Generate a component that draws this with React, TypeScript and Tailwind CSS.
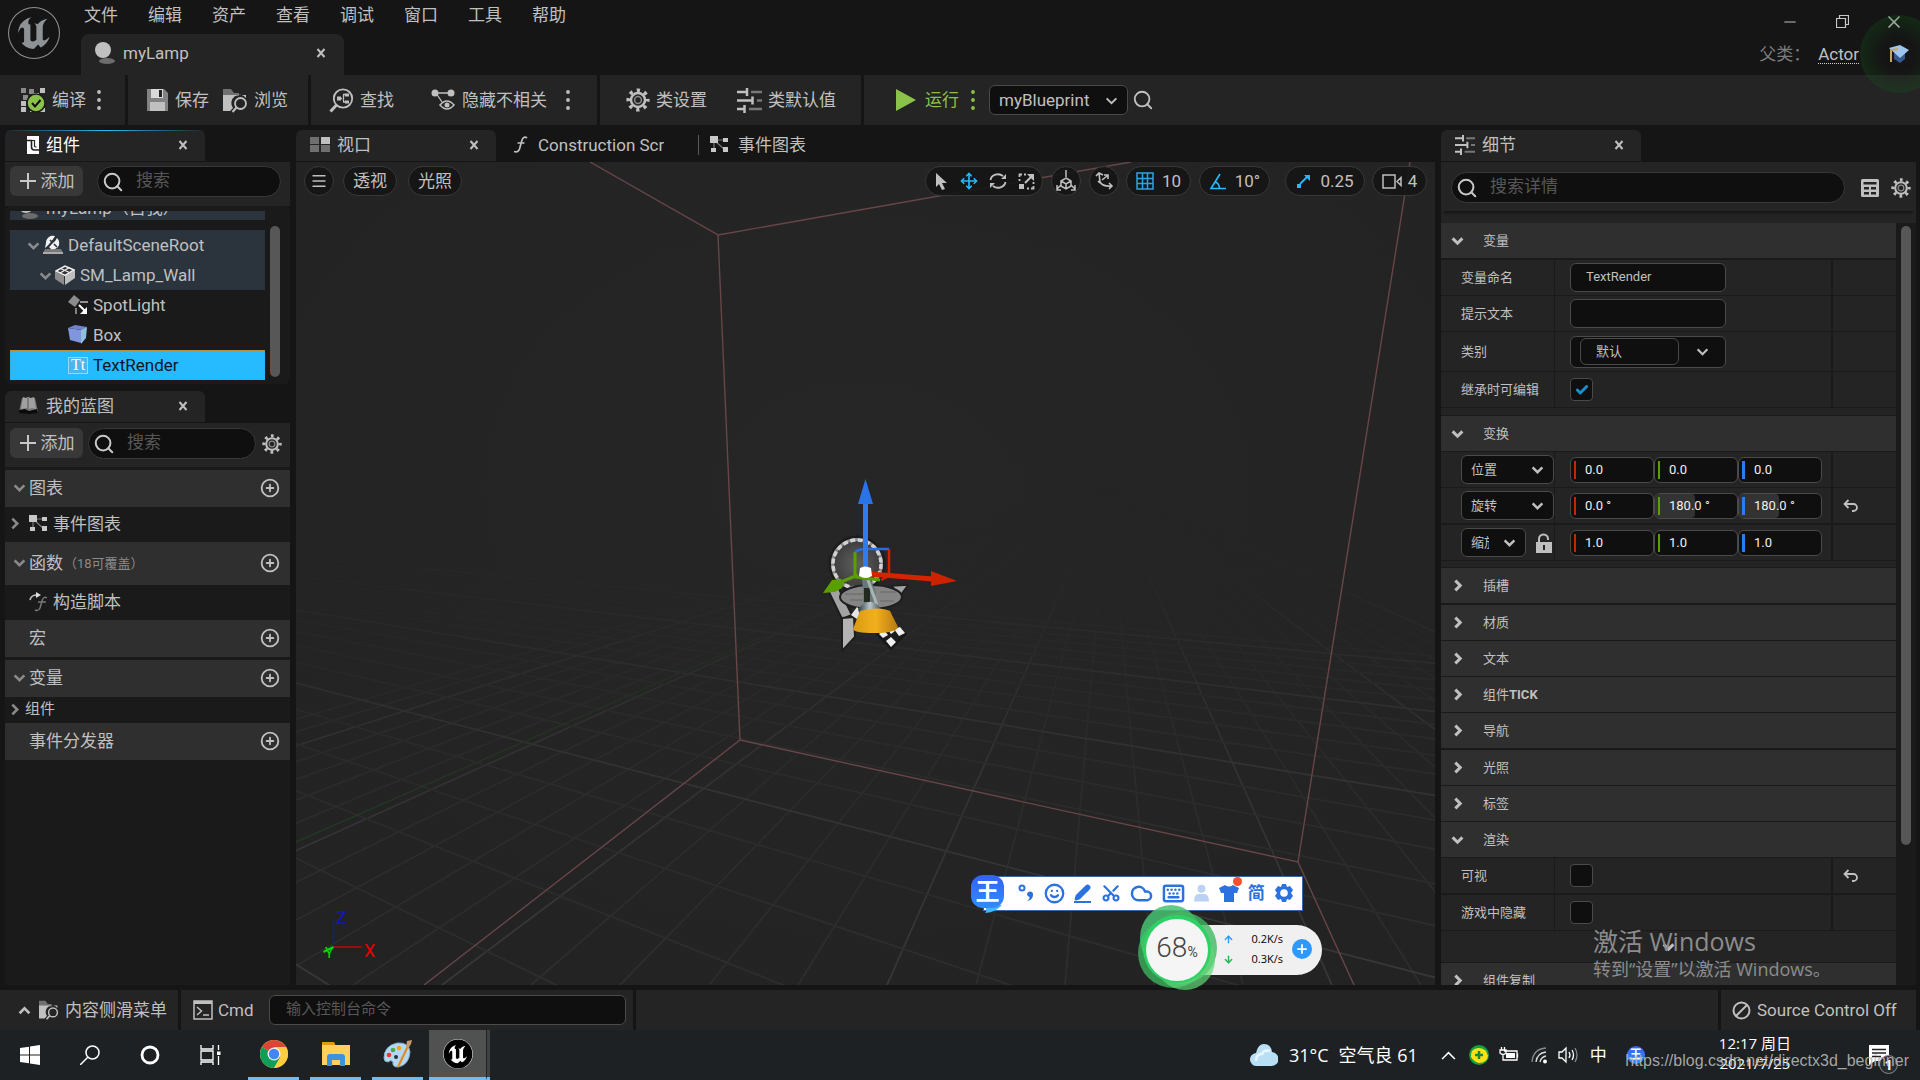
import React from "react";
import {
  ArrowDown,
  ArrowUp,
  Check,
  CirclePlus,
  Cloud,
  Keyboard,
  Menu,
  Minus,
  Move,
  Pencil,
  Plus,
  Scissors,
  Search,
  Smile,
  X,
} from "lucide-react";
import { SiUnrealengine } from "react-icons/si";

const LIGHT = "#c0c0c0";

/* ---------- icons ---------- */

const CHEVRONS = {
  down: "M1.500 4l4.500 4.500L10.500 4",
  up: "M1.500 8.500L6 4l4.500 4.500",
  right: "M4 1.500L8.500 6 4 10.500",
};

function Chevron({
  dir,
  weight = 2,
  color = LIGHT,
  size = 13,
  className = "",
}: {
  dir: keyof typeof CHEVRONS;
  weight?: number;
  color?: string;
  size?: number;
  className?: string;
}) {
  return (
    <svg
      width={size}
      height={size}
      viewBox="0 0 12 12"
      fill="none"
      stroke={color}
      strokeWidth={weight}
      className={"shrink-0 " + className}
      aria-hidden
    >
      <path d={CHEVRONS[dir]} />
    </svg>
  );
}

function CloseX() {
  return (
    <svg width="10" height="10" viewBox="0 0 10 10" aria-hidden>
      <path d="M1.500 1l7 8M8.500 1l-7 8" stroke={LIGHT} strokeWidth="2" />
    </svg>
  );
}

function Dots({ color = LIGHT }: { color?: string }) {
  return (
    <svg width="4" height="20" viewBox="0 0 4 20" fill={color} aria-hidden>
      <circle cx="2" cy="2" r="1.900" />
      <circle cx="2" cy="10" r="1.900" />
      <circle cx="2" cy="18" r="1.900" />
    </svg>
  );
}

function CompileIcon() {
  return (
    <svg width="26" height="26" viewBox="0 0 26 26" aria-hidden>
      <path d="M1 1h5v5H1zM9 2h5v5H9zM3 8h5v5H3z" fill="#8a8a8a" />
      <path
        d="M20 1h5v5h-5zM14 6h5v5h-5zM9 9h4v4H9zM1 14h5v5H1zM7 16h4v4H7zM1 20h5v5H1zM20 21h5v4h-5zM10 22h4v3h-4z"
        fill={LIGHT}
      />
      <circle cx="16" cy="16" r="9" fill="#8bc24a" stroke="#1b1b1b" strokeWidth="1.500" />
      <path d="M12 16l3 3.500 5.500-6.500" fill="none" stroke="#111" strokeWidth="2" />
    </svg>
  );
}

function SaveIcon() {
  return (
    <svg width="23" height="24" viewBox="0 0 23 24" aria-hidden>
      <path d="M1 1h17l4 4v18H1z" fill="#828282" />
      <path d="M5 1h12v9H5z" fill="#dadada" />
      <path d="M13 2h3v7h-3z" fill="#222" />
      <path d="M4 14h15v9H4z" fill={LIGHT} />
    </svg>
  );
}

function BrowseIcon({ size = 25 }: { size?: number }) {
  return (
    <svg width={size} height={size} viewBox="0 0 25 25" aria-hidden>
      <path d="M0 1h8l3 4h5v3H0z" fill="#707070" />
      <path d="M0 7h23v3a8 8 0 0 0-13 10l-3 3H0z" fill={LIGHT} />
      <circle cx="17.500" cy="15.500" r="5.500" fill="none" stroke={LIGHT} strokeWidth="1.800" />
      <path d="M13.500 19.500L9.500 24" stroke={LIGHT} strokeWidth="2" />
    </svg>
  );
}

function FindIcon() {
  return (
    <svg width="25" height="25" viewBox="0 0 25 25" fill="none" stroke={LIGHT} aria-hidden>
      <circle cx="14" cy="10.500" r="9.200" strokeWidth="1.800" />
      <path d="M7.500 17L1.500 23.500" strokeWidth="3" />
      <path d="M9 10.500h4M14.500 7v7M17 6.500h-3M17 14h-3" strokeWidth="1.300" />
      <path d="M8 8.500h4v4H8zM16 5.500h4v3h-4zM16 12.500h4v3h-4z" fill={LIGHT} stroke="none" />
    </svg>
  );
}

function HideIcon() {
  return (
    <svg width="25" height="25" viewBox="0 0 25 25" fill="none" stroke={LIGHT} aria-hidden>
      <path d="M4 5h15M5 5l6 9" strokeWidth="1.300" />
      <circle cx="4" cy="5" r="3.500" fill={LIGHT} stroke="none" />
      <circle cx="20" cy="5" r="3.500" fill={LIGHT} stroke="none" />
      <path d="M9 17q7-8 14 0q-7 8-14 0z" strokeWidth="1.600" />
      <circle cx="16" cy="17" r="2.500" fill={LIGHT} stroke="none" />
    </svg>
  );
}

function GearIcon({ size = 24 }: { size?: number }) {
  return (
    <svg width={size} height={size} viewBox="0 0 24 24" fill="none" aria-hidden>
      <circle
        cx="12"
        cy="12"
        r="9.800"
        stroke={LIGHT}
        strokeWidth="3.600"
        strokeDasharray="3.300 4.397"
        strokeDashoffset="1.600"
      />
      <circle cx="12" cy="12" r="7" stroke={LIGHT} strokeWidth="2.500" />
      <circle cx="12" cy="12" r="3.400" stroke="#8a8a8a" strokeWidth="1.500" />
    </svg>
  );
}

function SlidersIcon({ size = 25 }: { size?: number }) {
  return (
    <svg width={size} height={size} viewBox="0 0 25 25" aria-hidden>
      <path d="M14 4h11M20 12.500h5M12 21h13" stroke="#777" strokeWidth="2.500" />
      <path d="M0 4h10M0 12.500h15M0 21h7" stroke={LIGHT} strokeWidth="2.500" />
      <path d="M10 0v8M15.500 8.500v8M7.500 17v8" stroke={LIGHT} strokeWidth="2.500" />
    </svg>
  );
}

function GraphIcon() {
  return (
    <svg width="19" height="17" viewBox="0 0 19 17" aria-hidden>
      <path d="M4 4h12M4 4v10M4 4l11 10" stroke="#777" strokeWidth="1.200" />
      <path d="M0 0h8v7H0zM13 2h5v4h-5zM1 12h5v4H1zM13 11h5v5h-5z" fill="#c8c8c8" />
    </svg>
  );
}

function SphereIcon() {
  return (
    <svg width="20" height="24" viewBox="0 0 20 24" aria-hidden>
      <ellipse cx="12" cy="20" rx="8" ry="3" fill="#6c6c6c" />
      <circle cx="8" cy="9" r="8" fill={LIGHT} />
    </svg>
  );
}

function ComponentsIcon() {
  return (
    <svg width="12" height="18" viewBox="0 0 12 18" aria-hidden>
      <path d="M0 0h12v18H0z" fill="#fff" />
      <path d="M0 4.500h4.500V11q0 3 3 3H12" fill="none" stroke="#222" strokeWidth="1.600" />
      <path d="M4.500 4.500h3V10q0 1 2 1" fill="none" stroke="#222" strokeWidth="1.200" />
    </svg>
  );
}

function BookIcon() {
  return (
    <svg width="20" height="19" viewBox="0 0 20 19" aria-hidden>
      <path d="M3 2h13l3 14H0z" fill="#777" />
      <path d="M4 1l3 1 2-1 3 1 3-1 2 12-4-1-3 1-3-1-5 1z" fill="#a0a0a0" />
      <path d="M0 14l6-1 4 2 8-2 1 4-9 1-10-1z" fill="#0b0b0b" />
      <path d="M9 2v11" stroke="#555" />
    </svg>
  );
}

function ViewportIcon() {
  return (
    <svg width="20" height="15" viewBox="0 0 20 15" aria-hidden>
      <path d="M0 0h9v7H0zM0 8h9v7H0zM11 8h9v7h-9z" fill="#707070" />
      <path d="M11 0h9v7h-9z" fill={LIGHT} />
    </svg>
  );
}

function FuncIcon() {
  return (
    <svg width="15" height="17" viewBox="0 0 15 17" fill="none" stroke={LIGHT} strokeWidth="1.700" aria-hidden>
      <path d="M14 2q-3-2.500-5 2L6.500 13q-1.500 4-5.500 2.500M4.500 7h7" />
    </svg>
  );
}

function OverrideFuncIcon() {
  return (
    <svg width="19" height="20" viewBox="0 0 19 20" fill="none" aria-hidden>
      <path d="M18 6q-3-2-4.500 1.500L11 16q-1.500 3.500-5 2M9 10h8" stroke="#777" strokeWidth="1.500" />
      <path d="M1 8q1-5 7-5" stroke={LIGHT} strokeWidth="1.600" />
      <path d="M7 0l5 3-5 3z" fill="#ddd" />
    </svg>
  );
}

function SceneRootIcon() {
  return (
    <svg width="20" height="20" viewBox="0 0 20 20" aria-hidden>
      <path d="M2 14h16l2 4H0z" fill="#777" />
      <path d="M0 17h20v2H0z" fill="#aaa" />
      <path d="M3 8a7 7 0 0 1 9-7l-4 7-6 5z" fill="#f2f2f2" />
      <path d="M14 3q4 4 1 9-3 3-7 2l-2-2 5-4z" fill="#f2f2f2" />
      <path d="M13 2L3 14M7 5l7 7" stroke="#2b333c" strokeWidth="1.600" />
      <path d="M8 11l4-4" stroke="#f2f2f2" strokeWidth="1.400" />
    </svg>
  );
}

function MeshIcon() {
  return (
    <svg width="20" height="20" viewBox="0 0 20 20" aria-hidden>
      <path d="M0 6l9 5v9l-9-6z" fill="#8c8c8c" />
      <path d="M20 5v8l-10 7v-9z" fill="#bdbdbd" />
      <path d="M1 6l9-5 9 4-9 5.500z" fill="#333" stroke="#eee" strokeWidth="1.500" />
      <path d="M5.500 3.500l9 4M5 8l9.500-5.500" stroke="#eee" strokeWidth="1.300" />
    </svg>
  );
}

function SpotIcon() {
  return (
    <svg width="20" height="20" viewBox="0 0 20 20" fill="none" aria-hidden>
      <path d="M6 0l6 5-5 7-7-5z" fill="#8c8c8c" />
      <path d="M8 13v6M12 7h8" stroke="#bbb" strokeWidth="1.300" />
      <path d="M11 10l7 7" stroke="#fff" strokeWidth="2" />
      <path d="M19 12v7h-7z" fill="#fff" />
    </svg>
  );
}

function BoxIcon() {
  return (
    <svg width="20" height="20" viewBox="0 0 20 20" aria-hidden>
      <path d="M0 3l7-3 12 2-5 3z" fill="#6f83cf" />
      <path d="M0 3l13 2v13L2 15z" fill="#7f95de" />
      <path d="M13 5l6-3-1 11-5 6z" fill="#8fc0dd" />
    </svg>
  );
}

function TextIcon() {
  return (
    <span className="flex h-[17px] w-5 items-center justify-center border border-[#8fdcff] bg-[#4db5e8] font-['Liberation_Serif',serif] text-base leading-none text-white">
      Tt
    </span>
  );
}

function UndoIcon() {
  return (
    <svg width="15" height="13" viewBox="0 0 15 13" fill="none" stroke={LIGHT} strokeWidth="1.800" aria-hidden>
      <path d="M5.500 1L1.500 5l4 4M2 5h8.500a3 3 0 0 1 0 7H9" />
    </svg>
  );
}

function LockIcon() {
  return (
    <svg width="16" height="20" viewBox="0 0 16 20" aria-hidden>
      <path d="M3 10V6a4.500 4.500 0 0 1 9 0v1" fill="none" stroke={LIGHT} strokeWidth="2" />
      <path d="M0 9h16v11H0z" fill={LIGHT} />
      <path d="M7 12h2v5H7z" fill="#242424" />
    </svg>
  );
}

/* ---------- shared pieces ---------- */

function PanelTab({
  icon,
  label,
  active = false,
}: {
  icon: React.ReactNode;
  label: string;
  active?: boolean;
}) {
  return (
    <div
      className={
        "relative flex h-[31px] w-[200px] shrink-0 items-center rounded-t-md bg-[#242424] pb-[2px] pl-[14px] pr-[17px] " +
        (active ? "text-white" : "text-[#c0c0c0]")
      }
    >
      {active && (
        <div className="absolute inset-x-0 top-0 h-px bg-linear-to-r from-transparent via-[#26bbff] to-transparent" />
      )}
      <span className="flex w-[27px] items-center">{icon}</span>
      <span className="flex-1">{label}</span>
      <button aria-label={"关闭" + label}>
        <CloseX />
      </button>
    </div>
  );
}

function AddButton() {
  return (
    <button className="flex h-[30px] w-[73px] shrink-0 items-center justify-center gap-[3px] rounded-md bg-[#383838] text-[#c0c0c0]">
      <svg width="18" height="18" viewBox="0 0 18 18" stroke="#c8c8c8" strokeWidth="2" aria-hidden>
        <path d="M9 1v16M1 9h16" />
      </svg>
      <span className="pl-px">添加</span>
    </button>
  );
}

function SearchBox({ placeholder, className }: { placeholder: string; className: string }) {
  return (
    <label
      className={
        "flex h-[31px] min-w-0 items-center gap-3 rounded-full border border-[#383838] bg-[#0f0f0f] pl-1 " + className
      }
    >
      <Search size={22} strokeWidth={2.2} className="shrink-0 text-[#c8c8c8]" />
      <input
        type="text"
        aria-label={placeholder}
        placeholder={placeholder}
        className="w-full min-w-0 bg-transparent pb-[3px] outline-none placeholder:text-[#575757]"
      />
    </label>
  );
}

/* ---------- header ---------- */

const MENUS = ["文件", "编辑", "资产", "查看", "调试", "窗口", "工具", "帮助"];

function Header() {
  return (
    <header className="flex h-[75px] shrink-0 bg-[#151515]">
      <div className="flex w-[81px] shrink-0 justify-center pr-[13px] pt-[7px]">
        <SiUnrealengine size={52} color="#8e9294" />
      </div>
      <div className="flex flex-1 flex-col justify-between">
        <nav className="flex h-[29px] items-center pl-[3px]">
          {MENUS.map((m) => (
            <button key={m} className="w-16 text-left">
              {m}
            </button>
          ))}
        </nav>
        <div className="flex h-[41px] w-[263px] items-center rounded-t-lg bg-[#242424] pb-[3px] pl-[14px] pr-[18px]">
          <SphereIcon />
          <span className="ml-2 flex-1">myLamp</span>
          <button aria-label="关闭 myLamp">
            <CloseX />
          </button>
        </div>
      </div>
      <div className="flex flex-col items-end">
        <div className="flex h-[43px] items-center">
          <button aria-label="最小化" className="flex w-[52px] justify-center">
            <Minus size={18} strokeWidth={1.5} />
          </button>
          <button aria-label="还原" className="flex w-[52px] justify-center">
            <svg width="13" height="13" viewBox="0 0 13 13" fill="none" stroke="#c8c8c8" strokeWidth="1.200">
              <path d="M3.500 3.500v-3h9v9h-3M.5 3.500h9v9h-9z" />
            </svg>
          </button>
          <button aria-label="关闭" className="flex w-[52px] justify-center">
            <X size={20} strokeWidth={2} />
          </button>
        </div>
        <div className="flex h-[22px] items-center gap-2 pr-[61px]">
          <span className="text-[#7a7a7a]">父类：</span>
          <a href="#actor" className="border-b border-dotted border-[#d0d0d0] leading-[18px]">
            Actor
          </a>
        </div>
      </div>
    </header>
  );
}

/* ---------- toolbar ---------- */

function ToolButton({
  icon,
  label,
  className = "",
}: {
  icon: React.ReactNode;
  label: string;
  className?: string;
}) {
  return (
    <button className={"flex shrink-0 items-center gap-[6px] " + className}>
      {icon}
      <span className="whitespace-nowrap">{label}</span>
    </button>
  );
}

function Toolbar() {
  return (
    <div className="flex h-[50px] shrink-0 gap-[3px] bg-[#151515] *:bg-[#242424]">
      <div className="flex w-[125px] items-center pl-5">
        <ToolButton icon={<CompileIcon />} label="编译" />
        <button aria-label="编译选项" className="ml-[11px]">
          <Dots />
        </button>
      </div>
      <div className="flex w-[180px] items-center gap-[14px] pl-[18px]">
        <ToolButton icon={<SaveIcon />} label="保存" className="gap-2" />
        <ToolButton icon={<BrowseIcon />} label="浏览" />
      </div>
      <div className="flex w-[286px] items-center pl-[18px]">
        <ToolButton icon={<FindIcon />} label="查找" />
        <ToolButton icon={<HideIcon />} label="隐藏不相关" className="ml-[37px]" />
        <button aria-label="隐藏选项" className="ml-[19px]">
          <Dots />
        </button>
      </div>
      <div className="flex w-[261px] items-center gap-[30px] pl-[26px]">
        <ToolButton icon={<GearIcon />} label="类设置" />
        <ToolButton icon={<SlidersIcon />} label="类默认值" />
      </div>
      <div className="flex flex-1 items-center pl-8">
        <button className="flex items-center gap-[9px] text-[#8bc24a]">
          <svg width="20" height="22" viewBox="0 0 20 22" aria-hidden>
            <path d="M0 0l20 11L0 22z" fill="#8bc24a" />
          </svg>
          运行
        </button>
        <button aria-label="运行选项" className="ml-3">
          <Dots color="#8bc24a" />
        </button>
        <div className="relative ml-[14px] flex items-center">
          <select
            aria-label="调试对象"
            className="h-[30px] w-[139px] appearance-none rounded-md border border-[#4a4a4a] bg-[#0f0f0f] pl-[9px] outline-none"
          >
            <option>myBlueprint</option>
          </select>
          <Chevron dir="down" weight={1.8} className="pointer-events-none absolute right-[10px]" />
        </div>
        <button aria-label="查找调试对象" className="ml-[4px]">
          <Search size={22} strokeWidth={2} />
        </button>
      </div>
    </div>
  );
}

/* ---------- left column ---------- */

function TreeRow({
  icon,
  label,
  className,
  chevron = false,
}: {
  icon: React.ReactNode;
  label: string;
  className: string;
  chevron?: boolean;
}) {
  return (
    <li className={"flex h-[30px] items-center " + className}>
      {chevron && <Chevron dir="down" weight={2.4} color="#8a8a8a" className="mr-[3px]" />}
      <span className="flex w-[25px] shrink-0 items-center">{icon}</span>
      <span>{label}</span>
    </li>
  );
}

function ComponentsPanel() {
  return (
    <section className="pt-[5px]">
      <PanelTab
        icon={
          <span className="pl-2">
            <ComponentsIcon />
          </span>
        }
        label="组件"
        active
      />
      <div className="mt-px flex h-11 items-start gap-[14px] bg-[#242424] pl-[5px] pr-[9px] pt-1">
        <AddButton />
        <SearchBox placeholder="搜索" className="flex-1" />
      </div>
      <div className="flex h-[178px] rounded-md bg-[#1a1a1a] pl-[5px] pr-[10px] pt-[5px]">
        <ul className="flex-1">
          <li className="flex h-[9px] items-end overflow-hidden bg-[#2b333c] pl-2 text-[#c0c0c0]">
            <span className="flex h-6 items-center gap-2">
              <SphereIcon />
              <span>myLamp（自我）</span>
            </span>
          </li>
          <li className="h-[10px]" aria-hidden />
          <TreeRow chevron icon={<SceneRootIcon />} label="DefaultSceneRoot" className="bg-[#2b333c] pl-[17px]" />
          <TreeRow chevron icon={<MeshIcon />} label="SM_Lamp_Wall" className="bg-[#2b333c] pl-[29px]" />
          <TreeRow icon={<SpotIcon />} label="SpotLight" className="pl-[58px]" />
          <TreeRow icon={<BoxIcon />} label="Box" className="pl-[58px]" />
          <TreeRow
            icon={<TextIcon />}
            label="TextRender"
            className="border border-dotted border-[#c08a30] bg-[#26bbff] pl-[57px] text-[#10181e]"
          />
        </ul>
        <div className="ml-[5px] mt-[15px] h-[151px] w-[10px] rounded-full bg-[#575757]" />
      </div>
    </section>
  );
}

function GroupHeader({
  label,
  note,
  chevron = false,
  className,
}: {
  label: string;
  note?: string;
  chevron?: boolean;
  className: string;
}) {
  return (
    <div className={"flex items-center bg-[#2f2f2f] pb-[2px] pr-[10px] " + className}>
      <span className="flex w-6 shrink-0 justify-end pr-[3px]">
        {chevron && <Chevron dir="down" weight={2.4} color="#8a8a8a" />}
      </span>
      <span>{label}</span>
      {note && <span className="ml-px pt-[2px] text-[13px] text-[#8a8a8a]">{note}</span>}
      <button aria-label={"添加" + label} className="ml-auto">
        <CirclePlus size={20} strokeWidth={2.2} />
      </button>
    </div>
  );
}

function BlueprintPanel() {
  return (
    <section className="flex min-h-0 flex-1 flex-col pt-[7px]">
      <PanelTab icon={<BookIcon />} label="我的蓝图" />
      <div className="mt-px flex h-11 shrink-0 items-start bg-[#242424] pl-[5px] pr-2 pt-[5px]">
        <AddButton />
        <SearchBox placeholder="搜索" className="ml-[5px] flex-1" />
        <button aria-label="设置" className="ml-[6px] mt-[6px]">
          <GearIcon size={20} />
        </button>
      </div>
      <div className="flex-1 bg-[#1a1a1a] pt-[3px]">
        <GroupHeader label="图表" chevron className="h-[37px]" />
        <div className="flex h-[35px] items-center pb-[2px] pl-[3px]">
          <Chevron dir="right" weight={2.4} color="#8a8a8a" className="mr-2" />
          <GraphIcon />
          <span className="ml-[5px]">事件图表</span>
        </div>
        <GroupHeader label="函数" note="（18可覆盖）" chevron className="h-[43px]" />
        <div className="flex h-[35px] items-center pb-[2px] pl-6">
          <OverrideFuncIcon />
          <span className="ml-[5px]">构造脚本</span>
        </div>
        <GroupHeader label="宏" className="mb-[3px] h-[37px]" />
        <GroupHeader label="变量" chevron className="h-[37px]" />
        <div className="flex h-[26px] items-center pb-[2px] pl-[3px] text-[15px]">
          <Chevron dir="right" weight={2.4} color="#8a8a8a" className="mr-1" />
          组件
        </div>
        <GroupHeader label="事件分发器" className="h-[37px]" />
      </div>
    </section>
  );
}

/* ---------- viewport ---------- */

const FAN = Array.from({ length: 34 }, (_, i) => 1065 + (i - 19) * 89);
const CROSS = Array.from({ length: 24 }, (_, i) => -125 + i * 227);

function Scene() {
  return (
    <svg
      className="absolute inset-0 h-full w-full"
      viewBox="296 162 1139 823"
      preserveAspectRatio="xMidYMid slice"
      aria-label="三维场景"
    >
      <defs>
        <linearGradient id="fade" x1="0" y1="0" x2="0" y2="1">
          <stop offset="0" stopColor="#fff" stopOpacity="0" />
          <stop offset="0.200" stopColor="#fff" stopOpacity="0.120" />
          <stop offset="0.500" stopColor="#fff" stopOpacity="0.650" />
          <stop offset="1" stopColor="#fff" />
        </linearGradient>
        <mask id="ground" maskUnits="userSpaceOnUse" x="296" y="485" width="1139" height="500">
          <rect x="296" y="485" width="1139" height="500" fill="url(#fade)" />
        </mask>
        <linearGradient id="axis" x1="0" y1="1" x2="1" y2="0">
          <stop offset="0" stopColor="#223a22" />
          <stop offset="1" stopColor="#242824" />
        </linearGradient>
        <radialGradient id="backdrop" cx="0.500" cy="0.400" r="0.700">
          <stop offset="0" stopColor="#262626" />
          <stop offset="1" stopColor="#232323" />
        </radialGradient>
        <linearGradient id="shade" x1="0" y1="0" x2="1" y2="0">
          <stop offset="0" stopColor="#d99a12" />
          <stop offset="0.500" stopColor="#f2b01e" />
          <stop offset="1" stopColor="#b67a10" />
        </linearGradient>
        <linearGradient id="metal" x1="0" y1="0" x2="1" y2="0">
          <stop offset="0" stopColor="#2c3a44" />
          <stop offset="0.500" stopColor="#b9c4c8" />
          <stop offset="1" stopColor="#33424c" />
        </linearGradient>
        <radialGradient id="dome">
          <stop offset="0" stopColor="#606060" />
          <stop offset="1" stopColor="#3a3a3a" />
        </radialGradient>
      </defs>
      <rect x="296" y="162" width="1139" height="823" fill="url(#backdrop)" />
      <g mask="url(#ground)" strokeWidth="1.800">
        {FAN.map((x, i) => (
          <path key={x} d={`M1108 485L${x} 985`} stroke={i % 5 === 2 ? "#383838" : "#2e2e2e"} />
        ))}
        {CROSS.map((x, i) => (
          <path key={x} d={`M-470 485L${x + x + 470} 1485`} stroke={i % 5 === 2 ? "#383838" : "#2e2e2e"} />
        ))}
      </g>
      <path d="M296 842L860 594" stroke="url(#axis)" strokeWidth="1.300" />
      <g fill="none" stroke="#684548" strokeWidth="1.400">
        <path d="M590 162L718 235L740 740L424 985M740 740L1298 862L1410 162M718 235L1131 162M1298 862L1354 985" />
      </g>

      <g strokeLinejoin="round">
        <circle cx="857" cy="564" r="26" fill="url(#dome)" stroke="#1c1c1c" strokeWidth="5" />
        <circle cx="857" cy="564" r="24.500" fill="none" stroke="#8c8c8c" strokeWidth="3" />
        <circle cx="857" cy="564" r="24" fill="none" stroke="#d2d2d2" strokeWidth="3.500" strokeDasharray="5 2.540" />
        <path d="M827 588l9-5 16 32-10 4z" fill="#a3a3a3" stroke="#1e1e1e" strokeWidth="2" />
        <path d="M892 586l16-1-8 11z" fill="#a3a3a3" stroke="#1e1e1e" strokeWidth="1.500" />
        <ellipse cx="871" cy="597" rx="31" ry="12" fill="#858585" stroke="#1e1e1e" strokeWidth="2" />
        <path d="M845 594h22M850 600h18M880 592h16M880 601h14" stroke="#666" strokeWidth="1" />
        <path d="M842 618l12-1 1 20-13 14z" fill="#b3b3b3" stroke="#1e1e1e" strokeWidth="2" />
        <path d="M851 615l6-8 4 4-4 8z" fill="#e5e5e5" />
        <path d="M862 578h8l6 14-3 14h-9z" fill="#69767c" />
        <path d="M864 588h6v14h-6z" fill="#22291f" />
        <path d="M868 580l9 25" stroke="#a9b3b3" strokeWidth="3" />
        <path d="M858 609q10-12 20-4l4 6-5 5h-17z" fill="url(#metal)" />
        <path d="M877 634l13-11 16 11-15 15z" fill="#1c1c1c" stroke="#181818" strokeWidth="2" />
        <path
          d="M879 634l5-4 4 5-5 3zM894 629l6-2 5 6-6 3zM886 641l5-4 5 5-5 5zM888 630l4-2 3 3-4 3z"
          fill="#f0f0f0"
        />
        <path d="M860 611q20-5 30 0l8 16q-2 6-24 6-20 0-21-4z" fill="url(#shade)" />
      </g>

      <g>
        <path d="M855 576v-24M858 575l-22 9" stroke="#5a9e00" strokeWidth="3" />
        <path d="M855 577l25 3" stroke="#5a9e00" strokeWidth="3" />
        <path d="M855 552q4-3 10-3h24" fill="none" stroke="#2b6be0" strokeWidth="2.500" />
        <path d="M889 549v27l-8 4" fill="none" stroke="#cc2200" strokeWidth="2.500" />
        <path d="M870 574l63 5" stroke="#d42400" strokeWidth="5" />
        <path d="M931 571l26 10-26 5z" fill="#cc2200" />
        <path d="M823 593l9-13 9-1q4 4 1 9l-7 4z" fill="#5a9e00" />
        <path d="M865.500 570v-68" stroke="#2f7cf0" strokeWidth="5" />
        <path d="M858 504l7.500-25 7.500 25z" fill="#2b73e8" />
        <path d="M860 568q5-3 11 0l1 8q-6 4-13 0z" fill="#fff" />
      </g>

      <g fill="none" strokeWidth="1.200">
        <path d="M333.500 947v-30" stroke="#1111d8" />
        <path d="M333.500 947h28" stroke="#e80000" />
        <path d="M333.500 947l-10 5" stroke="#00e000" strokeWidth="2" />
      </g>
      <g className="font-[Roboto,sans-serif]" fontSize="18">
        <text x="336" y="924" fill="#1111d8">
          Z
        </text>
        <text x="364" y="957" fill="#e80000">
          X
        </text>
        <text x="325" y="958" fill="#00e000" fontSize="14">
          Y
        </text>
      </g>
    </svg>
  );
}

const PILL =
  "flex h-[30px] items-center justify-center rounded-full border border-[#383838] bg-[#151515]/90 text-[#c0c0c0]";

function ViewportToolbar() {
  return (
    <div className="absolute inset-x-0 top-1 flex items-center pl-2 pr-2">
      <button aria-label="视口选项" className={PILL + " w-[30px]"}>
        <Menu size={18} strokeWidth={1.8} />
      </button>
      <button className={PILL + " ml-[9px] w-[54px]"}>透视</button>
      <button className={PILL + " ml-[11px] w-[54px]"}>光照</button>
      <div className={PILL + " ml-auto w-[118px] gap-[11px]"}>
        <button aria-label="选择">
          <svg width="15" height="18" viewBox="0 0 15 18">
            <path d="M2 1l11 10H8l3 6-3 1-3-6-3 3z" fill={LIGHT} />
          </svg>
        </button>
        <button aria-label="移动" className="text-[#26bbff]">
          <Move size={18} strokeWidth={2.2} />
        </button>
        <button aria-label="旋转">
          <svg width="18" height="18" viewBox="0 0 18 18" fill="none" stroke={LIGHT} strokeWidth="1.800">
            <path d="M1.500 8A7.500 6.500 0 0 1 14 4M16.500 10A7.500 6.500 0 0 1 4 14" />
            <path d="M17 2v5h-5zM1 16v-5h5z" fill={LIGHT} stroke="none" />
          </svg>
        </button>
        <button aria-label="缩放">
          <svg width="17" height="17" viewBox="0 0 17 17" fill="none" stroke={LIGHT} strokeWidth="1.800">
            <path d="M1.500 8V6M1.500 4V1.500H4M6 1.500h2M15.500 9v2M15.500 13v2.500H13M11 15.500H9" />
            <path d="M7 10l6-6" strokeWidth="2" />
            <path d="M9 1h7v7zM1 11h5v5H1z" fill={LIGHT} stroke="none" />
          </svg>
        </button>
      </div>
      <button aria-label="世界坐标" className={PILL + " ml-2 w-[30px]"}>
        <svg width="22" height="24" viewBox="0 0 22 24" fill="none" stroke={LIGHT} strokeWidth="1.500">
          <path d="M11 1v7M11 9l5 3v5l-5 3-5-3v-5zM6 12l5 3 5-3M11 15v5M6 16l-4 4M16 16l4 4M2 16v5h4M20 16v5h-4" />
        </svg>
      </button>
      <button aria-label="表面对齐" className={PILL + " ml-2 w-[30px]"}>
        <svg width="20" height="20" viewBox="0 0 20 20" fill="none" stroke={LIGHT} strokeWidth="1.600">
          <path d="M5 2l1 9q3 5 12 4M2 5l3-3 4 2M15 12l3 3-3 3M8 9l5-4M10 4h4v4M4 10l2 2" />
        </svg>
      </button>
      <button className={PILL + " ml-[7px] w-[65px] gap-2"}>
        <svg width="18" height="18" viewBox="0 0 18 18" fill="none" stroke="#26a7e5" strokeWidth="1.500">
          <path d="M1 1h16v16H1zM6.500 1v16M11.500 1v16M1 6.500h16M1 11.500h16" />
        </svg>
        10
      </button>
      <button className={PILL + " ml-2 w-[71px] gap-2"}>
        <svg width="18" height="17" viewBox="0 0 18 17" fill="none" stroke="#26bbff" strokeWidth="1.600">
          <path d="M11 1L2 15.500h15M6 9q4 1 4.500 6" />
        </svg>
        10°
      </button>
      <button className={PILL + " ml-[15px] w-[80px] gap-[9px]"}>
        <svg width="15" height="15" viewBox="0 0 15 15">
          <path d="M4 10l7-7" stroke="#26bbff" strokeWidth="1.800" />
          <path d="M8 1h6v6zM1 10h4v4H1z" fill="#26bbff" />
        </svg>
        0.25
      </button>
      <button className={PILL + " ml-[7px] w-[55px] gap-[6px]"}>
        <svg width="20" height="15" viewBox="0 0 20 15" fill="none" stroke={LIGHT} strokeWidth="1.500">
          <path d="M1 1h12v13H1zM15 7.500l4-4v8z" />
        </svg>
        4
      </button>
    </div>
  );
}

function ViewportPanel() {
  return (
    <main className="flex min-w-0 flex-1 flex-col pt-[5px]">
      <div className="flex h-8 shrink-0 items-start">
        <PanelTab icon={<ViewportIcon />} label="视口" />
        <button className="ml-[17px] flex h-[31px] w-[185px] items-center gap-[10px] pb-[2px] text-[#c0c0c0]">
          <FuncIcon />
          <span className="w-[126px] overflow-hidden whitespace-nowrap text-left">Construction Script</span>
        </button>
        <div className="mt-[5px] h-5 w-px bg-[#5a5a5a]" />
        <button className="ml-[11px] flex h-[31px] items-center gap-[9px] pb-[2px] text-[#c0c0c0]">
          <GraphIcon />
          事件图表
        </button>
      </div>
      <div className="relative flex-1 overflow-hidden bg-[#242424]">
        <Scene />
        <ViewportToolbar />
      </div>
    </main>
  );
}

/* ---------- details ---------- */

function Category({
  label,
  strong,
  open = false,
  thick = false,
}: {
  label: string;
  strong?: string;
  open?: boolean;
  thick?: boolean;
}) {
  return (
    <div
      className={
        "flex shrink-0 items-center border-[#1a1a1a] bg-[#2f2f2f] pl-[10px] " +
        (thick ? "h-[37px] border-b-2" : "h-9 border-b")
      }
    >
      <button aria-label={label} aria-expanded={open} className="flex w-8">
        <Chevron dir={open ? "down" : "right"} weight={2.8} />
      </button>
      <span>
        {label}
        {strong && <b>{strong}</b>}
      </span>
    </div>
  );
}

function Row({
  name,
  children,
  reset = false,
  className = "h-9 border-b",
}: {
  name: React.ReactNode;
  children?: React.ReactNode;
  reset?: boolean;
  className?: string;
}) {
  return (
    <div className={"flex shrink-0 border-[#1a1a1a] bg-[#242424] " + className}>
      <div className="flex w-[114px] shrink-0 items-center border-r border-[#1a1a1a] pl-5">{name}</div>
      <div className="flex flex-1 items-center pl-[15px]">{children}</div>
      <div className="flex w-[65px] shrink-0 items-center border-l-2 border-[#1a1a1a] pl-[10px]">
        {reset && (
          <button aria-label="重置为默认值">
            <UndoIcon />
          </button>
        )}
      </div>
    </div>
  );
}

function CheckBox({ label, checked = false }: { label: string; checked?: boolean }) {
  return (
    <span className="relative flex size-[23px] items-center justify-center">
      <input
        type="checkbox"
        aria-label={label}
        defaultChecked={checked}
        className="absolute inset-0 appearance-none rounded border border-[#4a4a4a] bg-[#0f0f0f]"
      />
      {checked && <Check size={14} strokeWidth={5} className="pointer-events-none relative text-[#1b8fce]" />}
    </span>
  );
}

function NameSelect({ value, className }: { value: string; className: string }) {
  return (
    <span className="relative flex items-center">
      <select
        aria-label={value}
        className={
          "h-[29px] appearance-none overflow-hidden rounded-md border border-[#4a4a4a] bg-[#0f0f0f] pl-[9px] outline-none " +
          className
        }
      >
        <option>{value}</option>
      </select>
      <Chevron dir="down" weight={2.2} className="pointer-events-none absolute right-[10px]" />
    </span>
  );
}

const AXIS = [
  { name: "X", bar: "w-[2px] bg-[#cc2200]" },
  { name: "Y", bar: "w-[2px] bg-[#5a9e00]" },
  { name: "Z", bar: "w-[3px] bg-[#2b7cf0]" },
];

function Vector({ label, values, filled = false }: { label: string; values: string[]; filled?: boolean }) {
  return (
    <div className="flex">
      {values.map((v, i) => (
        <label
          key={AXIS[i].name}
          className="relative flex h-[26px] w-[84px] items-center overflow-hidden rounded-md border border-[#4a4a4a] bg-[#0f0f0f] pl-[3px]"
        >
          {filled && i > 0 && <span className="absolute inset-y-0 left-0 w-10 rounded bg-[#333]" />}
          <span className={"relative h-[18px] shrink-0 " + AXIS[i].bar} />
          <input
            type="text"
            aria-label={label + " " + AXIS[i].name}
            defaultValue={v}
            className="relative w-full min-w-0 bg-transparent pl-[9px] text-[#f0f0f0] outline-none"
          />
        </label>
      ))}
    </div>
  );
}

const FIELD = "h-[29px] w-[156px] rounded-md border border-[#4a4a4a] bg-[#0f0f0f] px-[15px] pb-[3px] outline-none";

function DetailsPanel() {
  return (
    <aside className="flex w-[475px] shrink-0 flex-col pt-[5px]">
      <PanelTab icon={<SlidersIcon size={20} />} label="细节" />
      <div className="mt-px flex h-[61px] shrink-0 flex-col bg-[#242424]">
        <div className="flex items-center pl-[10px] pr-[5px] pt-[10px]">
          <SearchBox placeholder="搜索详情" className="flex-1" />
          <button aria-label="属性矩阵" className="ml-4">
            <svg width="18" height="18" viewBox="0 0 18 18">
              <rect width="18" height="18" rx="1.500" fill={LIGHT} />
              <path d="M2.500 3h13v2.500h-13zM3 8h5v2.500H3zM10 8h5v2.500h-5zM3 13h5v2.500H3zM10 13h5v2.500h-5z" fill="#242424" />
            </svg>
          </button>
          <button aria-label="细节设置" className="ml-3">
            <GearIcon size={20} />
          </button>
        </div>
        <div className="mx-[3px] mt-2 h-2 bg-linear-to-b from-[#151515] to-transparent to-60%" />
      </div>
      <div className="flex min-h-0 flex-1 bg-[#1a1a1a] text-[13px] text-[#c0c0c0]">
        <div className="flex flex-1 flex-col overflow-hidden bg-[#242424]">
          <Category label="变量" open thick />
          <Row name={<label htmlFor="var-name">变量命名</label>}>
            <input id="var-name" type="text" defaultValue="TextRender" className={FIELD} />
          </Row>
          <Row name={<label htmlFor="tip-text">提示文本</label>}>
            <input id="tip-text" type="text" className={FIELD} />
          </Row>
          <Row name={<label htmlFor="category">类别</label>} className="h-10 border-b">
            <div className="flex h-8 w-[156px] items-center rounded-md border border-[#4a4a4a] bg-[#0f0f0f] pl-[9px]">
              <input
                id="category"
                type="text"
                defaultValue="默认"
                className="h-[27px] w-[99px] rounded-md border border-[#4a4a4a] bg-[#0f0f0f] px-[15px] pb-[3px] outline-none"
              />
              <button aria-label="选择类别" className="flex flex-1 justify-center">
                <Chevron dir="down" />
              </button>
            </div>
          </Row>
          <Row name="继承时可编辑">
            <CheckBox label="继承时可编辑" checked />
          </Row>
          <div className="h-2 shrink-0 border-b border-[#1a1a1a]" />
          <Category label="变换" open />
          <Row name={<NameSelect value="位置" className="w-[93px]" />}>
            <Vector label="位置" values={["0.0", "0.0", "0.0"]} />
          </Row>
          <Row name={<NameSelect value="旋转" className="w-[93px]" />} reset className="h-[37px] border-b-2">
            <Vector label="旋转" values={["0.0 °", "180.0 °", "180.0 °"]} filled />
          </Row>
          <Row
            name={
              <>
                <NameSelect value="缩放" className="w-[65px] pr-[36px]" />
                <button aria-label="锁定比例" className="ml-[10px]">
                  <LockIcon />
                </button>
              </>
            }
          >
            <Vector label="缩放" values={["1.0", "1.0", "1.0"]} />
          </Row>
          <div className="h-[7px] shrink-0 border-b border-[#1a1a1a]" />
          <Category label="插槽" thick />
          <Category label="材质" />
          <Category label="文本" />
          <Category label="组件" strong="TICK" />
          <Category label="导航" thick />
          <Category label="光照" />
          <Category label="标签" />
          <Category label="渲染" open />
          <Row name="可视" reset className="h-[37px] border-b-2">
            <CheckBox label="可视" />
          </Row>
          <Row name="游戏中隐藏">
            <CheckBox label="游戏中隐藏" />
          </Row>
          <div className="flex h-8 shrink-0 items-center justify-center border-b border-[#1a1a1a]">
            <button aria-label="展开高级选项">
              <Chevron dir="down" weight={2.8} />
            </button>
          </div>
          <Category label="组件复制" />
        </div>
        <div className="w-5 shrink-0 pl-[5px] pt-[3px]">
          <div className="h-[619px] w-[10px] rounded-full bg-[#575757]" />
        </div>
      </div>
    </aside>
  );
}

/* ---------- bottom bars ---------- */

function StatusBar() {
  return (
    <footer className="flex h-10 shrink-0 gap-[3px] bg-[#151515] pr-1 *:bg-[#242424]">
      <button className="flex w-[178px] items-center pl-[18px]">
        <Chevron dir="up" weight={2.4} />
        <span className="ml-2 flex w-[26px]">
          <BrowseIcon size={20} />
        </span>
        内容侧滑菜单
      </button>
      <div className="flex w-[452px] items-center pl-3">
        <svg width="20" height="20" viewBox="0 0 20 20" fill="none" stroke={LIGHT} aria-hidden>
          <path d="M1 1h18v18H1z" strokeWidth="1.500" />
          <path d="M1 2.500h18" strokeWidth="3" />
          <path d="M4 7l4.500 4-4.500 4M10 15h6" strokeWidth="1.500" />
        </svg>
        <label htmlFor="console" className="ml-[5px] w-[51px]">
          Cmd
        </label>
        <input
          id="console"
          type="text"
          placeholder="输入控制台命令"
          className="h-[30px] w-[357px] rounded-md border border-[#4a4a4a] bg-[#0f0f0f] px-4 pb-[3px] text-[15px] outline-none placeholder:text-[#575757]"
        />
      </div>
      <div className="flex-1" />
      <button className="flex w-[195px] items-center gap-[6px] pl-[11px]">
        <svg width="19" height="19" viewBox="0 0 19 19" fill="none" stroke={LIGHT} strokeWidth="2" aria-hidden>
          <circle cx="9.500" cy="9.500" r="8" />
          <path d="M4 15L15 4" />
        </svg>
        <span className="whitespace-nowrap">Source Control Off</span>
      </button>
    </footer>
  );
}

function WangBadge({ className }: { className: string }) {
  return (
    <span
      className={
        "flex items-center justify-center bg-linear-to-b from-[#3561f5] to-[#2f8cff] font-bold text-white " + className
      }
    >
      王
    </span>
  );
}

function Taskbar() {
  return (
    <div className="flex h-[50px] shrink-0 items-center bg-[#1e2123] font-['Open_Sans','Noto_Sans_CJK_SC',sans-serif] text-white">
      <button aria-label="开始" className="flex w-[60px] justify-center">
        <svg width="20" height="20" viewBox="0 0 20 20" fill="#fff">
          <path d="M0 3l9-1.300V9.500H0zM10 1.500L20 0v9.500H10zM0 10.500h9v7.800L0 17zM10 10.500h10V20l-10-1.500z" />
        </svg>
      </button>
      <button aria-label="搜索" className="flex w-[60px] justify-center">
        <svg width="20" height="20" viewBox="0 0 20 20" fill="none" stroke="#fff" strokeWidth="1.500">
          <circle cx="12.500" cy="7.500" r="6.500" />
          <path d="M8 12l-8 8" />
        </svg>
      </button>
      <button aria-label="Cortana" className="flex w-[60px] justify-center">
        <svg width="20" height="20" viewBox="0 0 20 20" fill="none" stroke="#fff" strokeWidth="2.800">
          <circle cx="10" cy="10" r="8" />
        </svg>
      </button>
      <button aria-label="任务视图" className="flex w-[60px] justify-center">
        <svg width="21" height="20" viewBox="0 0 21 20" fill="none" stroke="#fff" strokeWidth="1.300">
          <path d="M1 0v4h12V0M1 6h12v9H1zM1 20v-3h12v3M18.500 0v5M18.500 11v9" />
          <path d="M17 6.500h3.500v3.500H17z" fill="#fff" stroke="none" />
        </svg>
      </button>
      <button
        aria-label="Chrome"
        className="ml-2 flex h-[50px] w-[51px] items-center justify-center border-b-3 border-[#76b9ed]"
      >
        <svg width="28" height="28" viewBox="0 0 28 28">
          <circle cx="14" cy="14" r="14" fill="#ffcd40" />
          <path d="M14 14L1.900 7A14 14 0 0 1 26.100 7z" fill="#db4437" />
          <path d="M14 14L1.900 7A14 14 0 0 0 14 28l6.500-11z" fill="#0f9d58" />
          <path d="M14 7h12.100A14 14 0 0 1 14 28l6-10.500z" fill="#ffcd40" />
          <circle cx="14" cy="14" r="6.500" fill="#f1f1f1" />
          <circle cx="14" cy="14" r="5.200" fill="#4285f4" />
        </svg>
      </button>
      <button
        aria-label="文件资源管理器"
        className="ml-[11px] flex h-[50px] w-[51px] items-center justify-center border-b-3 border-[#76b9ed]"
      >
        <svg width="28" height="24" viewBox="0 0 28 24">
          <path d="M0 0h12l2 4H0z" fill="#e09c10" />
          <path d="M0 3h28v20H0z" fill="#ffd15c" />
          <path d="M5 24v-9q0-3 3-3h12q3 0 3 3v9h-5v-6h-8v6z" fill="#3b92dd" />
        </svg>
      </button>
      <button
        aria-label="画图"
        className="ml-[11px] flex h-[50px] w-[51px] items-center justify-center border-b-3 border-[#76b9ed]"
      >
        <svg width="30" height="28" viewBox="0 0 30 28">
          <path d="M1 18Q1 6 14 3q12-1 13 9-1 13-12 15-6 0-5-5-2-3-5 0-4 0-4-4z" fill="#b5d8ee" stroke="#7fb0d0" />
          <circle cx="6" cy="15" r="2.300" fill="#e23b35" />
          <circle cx="10" cy="10" r="2.300" fill="#4aae3c" />
          <circle cx="16" cy="8" r="2.300" fill="#f2a41e" />
          <circle cx="13" cy="17" r="2" fill="#23353f" />
          <path d="M15 27l10-21" stroke="#e08a2c" strokeWidth="2.200" />
          <path d="M23 7l1-6 5-1-1 4-3 5z" fill="#c79a6b" />
        </svg>
      </button>
      <button
        aria-label="Unreal"
        className="ml-[6px] flex h-[50px] w-[57px] items-center justify-center border-b-3 border-[#76b9ed] bg-[#505252]"
      >
        <span className="flex size-[30px] items-center justify-center rounded-full bg-black">
          <SiUnrealengine size={30} color="#fff" />
        </span>
      </button>
      <span className="h-[50px] w-1 border-b-3 border-l border-b-[#76b9ed] border-l-[#222] bg-[#3f4243]" aria-hidden />

      <div className="ml-auto flex items-center">
        <svg width="28" height="24" viewBox="0 0 28 24" aria-hidden>
          <path d="M7 23a6.500 6.500 0 0 1-1-13Q8 1 14 1q7 0 8 8a6.500 6.500 0 0 1-1 14z" fill="#b9dff5" />
          <path d="M6 18q0-7 6-7 2-5 8-3" fill="none" stroke="#e8f6fd" strokeWidth="2.500" />
        </svg>
        <span className="ml-[11px] text-[18px]">31°C</span>
        <span className="ml-[10px] text-[18px]">空气良 61</span>
        <button aria-label="显示隐藏的图标" className="ml-[22px]">
          <Chevron dir="up" size={17} weight={1.1} color="#fff" />
        </button>
        <svg className="ml-[12px]" width="20" height="20" viewBox="0 0 20 20" aria-hidden>
          <circle cx="10" cy="10" r="10" fill="#12a23c" />
          <path d="M2 12Q1 4 9 3q5 0 8 3l2 5q-1 7-9 7-5-1-8-6z" fill="#ffe11a" />
          <path d="M10 6v8M6 10h8" stroke="#138a35" strokeWidth="2.500" />
        </svg>
        <svg className="ml-[10px]" width="20" height="16" viewBox="0 0 20 16" fill="none" stroke="#fff" aria-hidden>
          <path d="M5 4h13v9H5M18.500 6.500v4M1 3h6v3q-3 3-6 0zM2.500 0v3M5.500 0v3M4 7v6h2" strokeWidth="1.300" />
          <path d="M7 6h9v5H7z" fill="#fff" stroke="none" />
        </svg>
        <svg className="ml-[12px]" width="18" height="19" viewBox="0 0 18 17" fill="none" aria-hidden>
          <path d="M1 15Q2 2 15 1" stroke="#8a8a8a" strokeWidth="1.300" />
          <path d="M5 15q1-9 10-10M9 15q1-5 6-6" stroke="#ddd" strokeWidth="1.300" />
          <circle cx="14" cy="14.500" r="2" fill="#fff" />
        </svg>
        <svg
          className="ml-[9px]"
          width="21"
          height="18"
          viewBox="0 0 21 18"
          fill="none"
          stroke="#fff"
          strokeWidth="1.300"
          aria-hidden
        >
          <path d="M1 6h3l4-4v14l-4-4H1zM11 6q2 3 0 6M14 4q3 5 0 10" />
          <path d="M17 2q4 7 0 14" stroke="#888" />
        </svg>
        <span className="ml-[11px] text-[17px]">中</span>
        <WangBadge className="ml-[20px] size-[18px] rounded-full text-xs" />
        <div className="ml-[74px] text-center text-[15px] leading-[26px]">
          <div className="-mt-1">12:17 周日</div>
          <div className="-mt-[6px]">2021/7/25</div>
        </div>
        <button aria-label="通知" className="relative ml-[78px] mr-[31px]">
          <svg width="20" height="20" viewBox="0 0 20 20">
            <path d="M0 0h20v16H6l-6 4z" fill="#fff" />
            <path d="M3 4.500h14M3 8h14M3 11.500h9" stroke="#222" strokeWidth="1.500" />
          </svg>
          <span className="absolute left-[10px] top-[10px] flex size-[19px] items-center justify-center rounded-full border border-[#888] bg-[#2a2d2f] text-sm font-bold">
            1
          </span>
        </button>
      </div>
    </div>
  );
}

/* ---------- floating desktop widgets ---------- */

function InputMethodBar() {
  return (
    <div className="absolute bottom-[169px] right-[617px] flex h-[36px] w-[332px] items-center">
      <div className="ml-3 flex h-[35px] flex-1 items-center justify-between border border-[#3c66a8] bg-white pl-[34px] pr-2 text-[#2b72e0]">
        <svg width="17" height="18" viewBox="0 0 17 18" aria-hidden>
          <circle cx="4" cy="4" r="2.500" fill="none" stroke="#2b72e0" strokeWidth="2" />
          <path d="M9 10a3 3 0 1 1 6 1q0 5-6 6 3-2 2.500-4A3 3 0 0 1 9 10z" fill="#2b72e0" />
        </svg>
        <Smile size={21} strokeWidth={2.6} />
        <span className="border-b-2 border-[#2b72e0]">
          <Pencil size={17} strokeWidth={2.4} fill="#2b72e0" />
        </span>
        <Scissors size={20} strokeWidth={2.6} className="-rotate-90" />
        <Cloud size={23} strokeWidth={2.6} />
        <Keyboard size={23} strokeWidth={2.6} />
        <svg width="15" height="18" viewBox="0 0 16 18" fill="#bcd2f5" aria-hidden>
          <circle cx="8" cy="4.500" r="4.200" />
          <path d="M0 18q0-8 5-8h6q5 0 5 8z" />
        </svg>
        <span className="relative">
          <svg width="20" height="17" viewBox="0 0 20 17" fill="#2b72e0" aria-hidden>
            <path d="M6 0q4 3 8 0l6 3-2 5h-3v9H5V8H2L0 3z" />
          </svg>
          <span className="absolute -right-[3px] -top-2 size-[9px] rounded-full bg-[#f4512c]" />
        </span>
        <span className="text-[17px] font-bold leading-none">简</span>
        <svg width="20" height="20" viewBox="0 0 20 20" aria-hidden>
          <path d="M8 1h4l1 3 3-1 3 4-2 3 2 3-3 4-3-1-1 3H8l-1-3-3 1-3-4 2-3-2-3 3-4 3 1z" fill="#2b72e0" />
          <circle cx="10" cy="10" r="3.800" fill="#fff" />
        </svg>
      </div>
      <svg className="absolute left-[11px] top-[28px]" width="20" height="10" viewBox="0 0 20 10" aria-hidden>
        <path d="M2 2h18Q14 9 3 10q3-3-1-8z" fill="#3fb8ff" />
      </svg>
      <WangBadge className="absolute left-0 top-0 size-[33px] rounded-[12px] text-[24px]" />
    </div>
  );
}

function SpeedBall() {
  return (
    <div className="absolute bottom-[90px] right-[598px] flex h-[85px] w-[185px] items-center">
      <div className="absolute left-[50px] right-0 top-[20px] flex h-[50px] items-center rounded-r-full bg-[#f0f0f0] pl-9 pr-[10px] text-[11px] text-black">
        <div className="flex flex-col gap-[9px] pb-px">
          <ArrowUp size={11} strokeWidth={3} className="text-[#2f98ff]" />
          <ArrowDown size={11} strokeWidth={3} className="text-[#1eb54c]" />
        </div>
        <div className="ml-auto mr-[9px] flex flex-col pb-[3px] font-['Open_Sans',sans-serif] leading-5">
          <span>0.2K/s</span>
          <span>0.3K/s</span>
        </div>
        <button
          aria-label="加速"
          className="mb-[2px] flex size-5 items-center justify-center rounded-full bg-[#2f98ff] text-white"
        >
          <Plus size={14} strokeWidth={3} />
        </button>
      </div>
      <div className="relative flex h-[85px] w-[80px] items-center justify-center">
        <svg className="absolute inset-0" width="80" height="85" viewBox="0 0 80 85" aria-hidden>
          <ellipse cx="34" cy="33" rx="31" ry="33" fill="#45c272" fillOpacity="0.850" />
          <circle cx="44" cy="43" r="36" fill="#41b85f" fillOpacity="0.800" />
          <circle cx="36" cy="48" r="35" fill="#3fc765" fillOpacity="0.700" />
          <circle cx="48" cy="55" r="30" fill="#5fd977" fillOpacity="0.700" />
          <circle cx="40" cy="44" r="34" fill="#2fd166" />
          <circle cx="40" cy="45" r="31" fill="#f5f5f5" />
        </svg>
        <span className="relative flex items-baseline pt-1 text-[28px] font-light text-[#444]">
          68<span className="text-[14px] font-normal">%</span>
        </span>
      </div>
    </div>
  );
}

function StudyBall() {
  return (
    <div className="pointer-events-none absolute -right-[18px] top-[15px] flex size-[78px] items-center justify-center rounded-full bg-radial from-transparent from-30% to-[#0f5a18]/50">
      <svg width="20" height="19" viewBox="0 0 20 19" aria-hidden>
        <path d="M5 8h11v6l-5 4-6-4z" fill="#35598c" />
        <path d="M0 3l11-3 9 5-9 8z" fill="#9cc6ee" />
        <path d="M9 4L2 5v12" fill="none" stroke="#c9a26b" strokeWidth="2" />
      </svg>
    </div>
  );
}

export default function App() {
  return (
    <div className="relative flex h-screen flex-col overflow-hidden bg-[#151515] font-[Roboto,'Noto_Sans_CJK_SC',sans-serif] text-[17px] leading-6 text-[#c0c0c0]">
      <Header />
      <Toolbar />
      <div className="flex min-h-0 flex-1 gap-[6px] pb-[5px] pl-[5px] pr-1">
        <div className="flex w-[285px] shrink-0 flex-col">
          <ComponentsPanel />
          <BlueprintPanel />
        </div>
        <ViewportPanel />
        <DetailsPanel />
      </div>
      <StatusBar />
      <Taskbar />

      <StudyBall />
      <InputMethodBar />
      <SpeedBall />
      <div className="pointer-events-none absolute bottom-[99px] right-[89px] w-[238px] whitespace-nowrap font-['Open_Sans','Noto_Sans_CJK_SC',sans-serif] text-[#8c8c8c]">
        <div className="text-[25px] leading-8">激活 Windows</div>
        <div className="text-[18px] leading-6">转到“设置”以激活 Windows。</div>
      </div>
      <div className="pointer-events-none absolute bottom-[7px] right-[11px] font-['Liberation_Sans',sans-serif] text-base text-[#b8b8b8]/90">
        https://blog.csdn.net/directx3d_beginner
      </div>
    </div>
  );
}
